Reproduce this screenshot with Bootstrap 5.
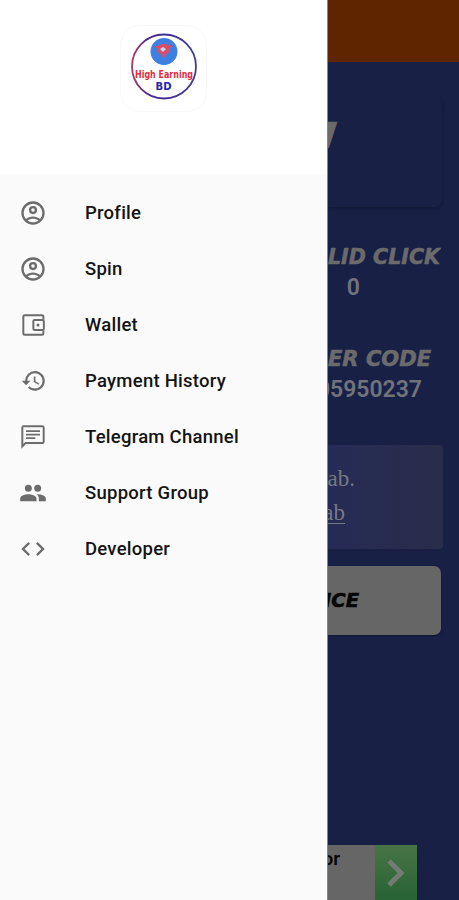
<!DOCTYPE html>
<html lang="en">
<head>
<meta charset="utf-8">
<meta name="viewport" content="width=device-width, initial-scale=1">
<title>High Earning BD</title>
<link href="https://cdn.jsdelivr.net/npm/bootstrap@5.3.0/dist/css/bootstrap.min.css" rel="stylesheet">
<style>
body{font-family:Roboto,"Liberation Sans",sans-serif;background:#182046}
.screen{height:900px}
.drawer{width:328px;background:#fafafa;border-right:1px solid #7e8798}
.drawer-head{height:174px;padding-top:25px}
.logo-tile{width:87px;height:87px;border:1px solid #f8f8f8;border-radius:20px}
.drawer-item{height:56px;padding-left:19px;gap:38px;color:#141414;font-size:18.5px;font-weight:500;letter-spacing:.25px;line-height:56px}
.drawer-item svg{width:28px;height:28px;fill:#6c6c6c}
.menu{padding-top:11px}
.page{background:#182046;color:#72747a}
.topbar{height:62px;background:#5e2500}
.tail{display:flex;justify-content:flex-end;white-space:nowrap;overflow:hidden}
.tail svg{flex-shrink:0}
.banner{height:111px;margin:34px 17px 0 0;padding:19px 104px 0 0;border-radius:0 7px 7px 0;box-shadow:1px 2px 2px #141c3c}
.techno{font-family:"DejaVu Sans",sans-serif;font-weight:700;font-style:italic;font-size:22px;fill:#6b6b6b;stroke:#6b6b6b;stroke-width:.6px}
.number{font-size:23px;line-height:28px;font-weight:600;color:#70737d}
.stat-a{margin-top:36px;padding-right:18px}
.num-a{margin-top:3px;padding-right:99px}
.stat-b{margin-top:43px;padding-right:27px}
.num-b{margin-top:3px;padding-right:37px}
.notice{height:104px;margin:41px 16px 0 0;padding:17px 88px 0 0;border-radius:0 4px 4px 0;background:linear-gradient(90deg,#252b55,#292d4b);font-family:"Liberation Serif",serif;font-size:23px;line-height:34px;color:#777985}
.notice u{margin-right:10px;text-underline-offset:3px;text-decoration-thickness:1px}
.action{height:69px;margin:17px 18px 0 0;padding-right:81px;border-radius:0 7px 7px 0;background:#666;box-shadow:0 1px 2px #10162f}
.banner .techno{font-size:35px}
.action .techno{font-size:19px;fill:#050505;stroke:#050505}
.advert{height:55px;margin:210px 42px 0 0;background:#666}
.advert-copy{width:47px;padding-right:35px;font-size:19px;line-height:27px;font-weight:600;color:#080808}
.advert-go{width:42px;background:linear-gradient(#477447,#286333)}
</style>
</head>
<body>
<div class="screen d-flex overflow-hidden">
  <aside class="drawer flex-shrink-0">
    <div class="drawer-head bg-white d-flex justify-content-center align-items-start">
      <div class="logo-tile d-flex">
        <svg width="85" height="85" viewBox="0 0 85 85" role="img" aria-label="High Earning BD">
          <defs><linearGradient id="ring"><stop stop-color="#b3365c"/><stop offset=".25" stop-color="#482790"/><stop offset="1" stop-color="#3d3d91"/></linearGradient></defs>
          <circle cx="43" cy="40.500" r="32" fill="#fff" stroke="url(#ring)" stroke-width="1.800"/>
          <circle cx="43" cy="25.500" r="13.500" fill="#3d80e2"/>
          <path d="M36 23q0-5 6.500-5t6.500 5q0 4-4 5l-2.500 5-2-5q-4.500-1-4.500-5" fill="#dc4d68"/>
          <path d="M39 23l3-2 3 2-3 3z" fill="#bcd9f5"/><path d="M34 20l3 2m11 0l2-3" stroke="#de4560" stroke-width="2"/>
          <text x="14" y="52" textLength="58" lengthAdjust="spacingAndGlyphs" font-family="DejaVu Sans" font-weight="700" font-size="10.500" fill="#dc3043">High Earning</text>
          <text x="34.500" y="63.500" textLength="16" lengthAdjust="spacingAndGlyphs" font-family="DejaVu Sans" font-weight="700" font-size="11" fill="#2426ab">BD</text>
        </svg>
      </div>
    </div>
    <nav class="menu d-flex flex-column">
      <a class="drawer-item d-flex align-items-center text-decoration-none" href="#"><svg viewBox="0 0 24 24"><path fill-rule="evenodd" d="M12 2a10 10 0 1 0 0 20 10 10 0 0 0 0-20zM7.350 18.500C8.660 17.560 10.260 17 12 17s3.340.56 4.650 1.500C15.340 19.440 13.740 20 12 20s-3.340-.56-4.650-1.500zm10.790-1.380C16.450 15.800 14.320 15 12 15s-4.450.8-6.140 2.120A8 8 0 1 1 18.140 17.120zM12 6a3.500 3.500 0 1 0 0 7 3.500 3.500 0 0 0 0-7zm0 5a1.500 1.500 0 1 1 0-3 1.500 1.500 0 0 1 0 3z"/></svg><span>Profile</span></a>
      <a class="drawer-item d-flex align-items-center text-decoration-none" href="#"><svg viewBox="0 0 24 24"><path fill-rule="evenodd" d="M12 2a10 10 0 1 0 0 20 10 10 0 0 0 0-20zM7.350 18.500C8.660 17.560 10.260 17 12 17s3.340.56 4.650 1.500C15.340 19.440 13.740 20 12 20s-3.340-.56-4.650-1.500zm10.790-1.380C16.450 15.800 14.320 15 12 15s-4.450.8-6.140 2.120A8 8 0 1 1 18.140 17.120zM12 6a3.500 3.500 0 1 0 0 7 3.500 3.500 0 0 0 0-7zm0 5a1.500 1.500 0 1 1 0-3 1.500 1.500 0 0 1 0 3z"/></svg><span>Spin</span></a>
      <a class="drawer-item d-flex align-items-center text-decoration-none" href="#"><svg viewBox="0 0 24 24"><g fill="none" stroke="#6c6c6c" stroke-width="1.700"><path d="M20.900 7.300V5q0-1.300-1.300-1.300H5Q3.700 3.700 3.700 5v14q0 1.300 1.300 1.300h14.600q1.300 0 1.300-1.300v-2.300"/><rect x="12.300" y="7.700" width="9" height="8.600" rx="1"/></g><circle cx="16.300" cy="12" r="1.300"/></svg><span>Wallet</span></a>
      <a class="drawer-item d-flex align-items-center text-decoration-none" href="#"><svg viewBox="0 0 24 24"><path transform="translate(1.400 .6) scale(.94)" d="M13 3a9 9 0 0 0-9 9H1l3.890 3.890.07.14L9 12H6a7 7 0 1 1 7 7c-1.930 0-3.680-.79-4.940-2.060l-1.420 1.420A9 9 0 1 0 13 3zm-1 5v5l4.280 2.540.72-1.210-3.500-2.080V8z"/></svg><span>Payment History</span></a>
      <a class="drawer-item d-flex align-items-center text-decoration-none" href="#"><svg viewBox="0 0 24 24"><path fill-rule="evenodd" d="M4 2h16a2 2 0 0 1 2 2v12a2 2 0 0 1-2 2H6l-4 4V4a2 2 0 0 1 2-2zm-.3 1.700v14.300L5.300 16.300H20.300V3.700zM6 12.200h8v1.600H6zm0-3h12v1.600H6zm0-3h12v1.600H6z"/></svg><span>Telegram Channel</span></a>
      <a class="drawer-item d-flex align-items-center text-decoration-none" href="#"><svg viewBox="0 0 24 24"><path d="M16 11a3 3 0 1 0 0-6 3 3 0 0 0 0 6zm-8 0a3 3 0 1 0 0-6 3 3 0 0 0 0 6zm0 2c-2.330 0-7 1.170-7 3.500V19h14v-2.500C15 14.170 10.330 13 8 13zm8 0c-.29 0-.62.02-.97.05C16.190 13.890 17 15.020 17 16.500V19h6v-2.500c0-2.330-4.670-3.500-7-3.500z"/></svg><span>Support Group</span></a>
      <a class="drawer-item d-flex align-items-center text-decoration-none" href="#"><svg viewBox="0 0 24 24"><path d="M9.400 16.600L4.800 12l4.600-4.600L8 6l-6 6 6 6zm5.200 0l4.600-4.600-4.600-4.600L16 6l6 6-6 6z"/></svg><span>Developer</span></a>
    </nav>
  </aside>
  <main class="page flex-grow-1 overflow-hidden">
    <div class="topbar"></div>
    <div class="banner tail"><svg width="50" height="42"><text class="techno" x="0" y="33" textLength="50" lengthAdjust="spacingAndGlyphs">N</text></svg></div>
    <div class="tail stat-a"><svg width="113" height="28"><text class="techno" x="0" y="21" textLength="112" lengthAdjust="spacingAndGlyphs">LID CLICK</text></svg></div>
    <div class="number tail num-a">0</div>
    <div class="tail stat-b"><svg width="104" height="28"><text class="techno" x="0" y="21" textLength="103" lengthAdjust="spacingAndGlyphs">ER CODE</text></svg></div>
    <div class="number tail num-b">05950237</div>
    <div class="notice text-end text-nowrap overflow-hidden"><div class="tail">ab.</div><div class="tail"><u>ab</u></div></div>
    <div class="action tail align-items-center"><svg width="36" height="28"><text class="techno" x="0" y="20" textLength="35" lengthAdjust="spacingAndGlyphs">ICE</text></svg></div>
    <div class="advert d-flex justify-content-between">
      <div class="advert-copy tail">or</div>
      <div class="advert-go d-flex align-items-center justify-content-center"><svg width="22" height="30" viewBox="0 0 22 30"><path d="M4 3l12 12L4 27" fill="none" stroke="#747b72" stroke-width="5"/></svg></div>
    </div>
  </main>
</div>
<script src="https://cdn.jsdelivr.net/npm/bootstrap@5.3.0/dist/js/bootstrap.bundle.min.js"></script>
</body>
</html>
